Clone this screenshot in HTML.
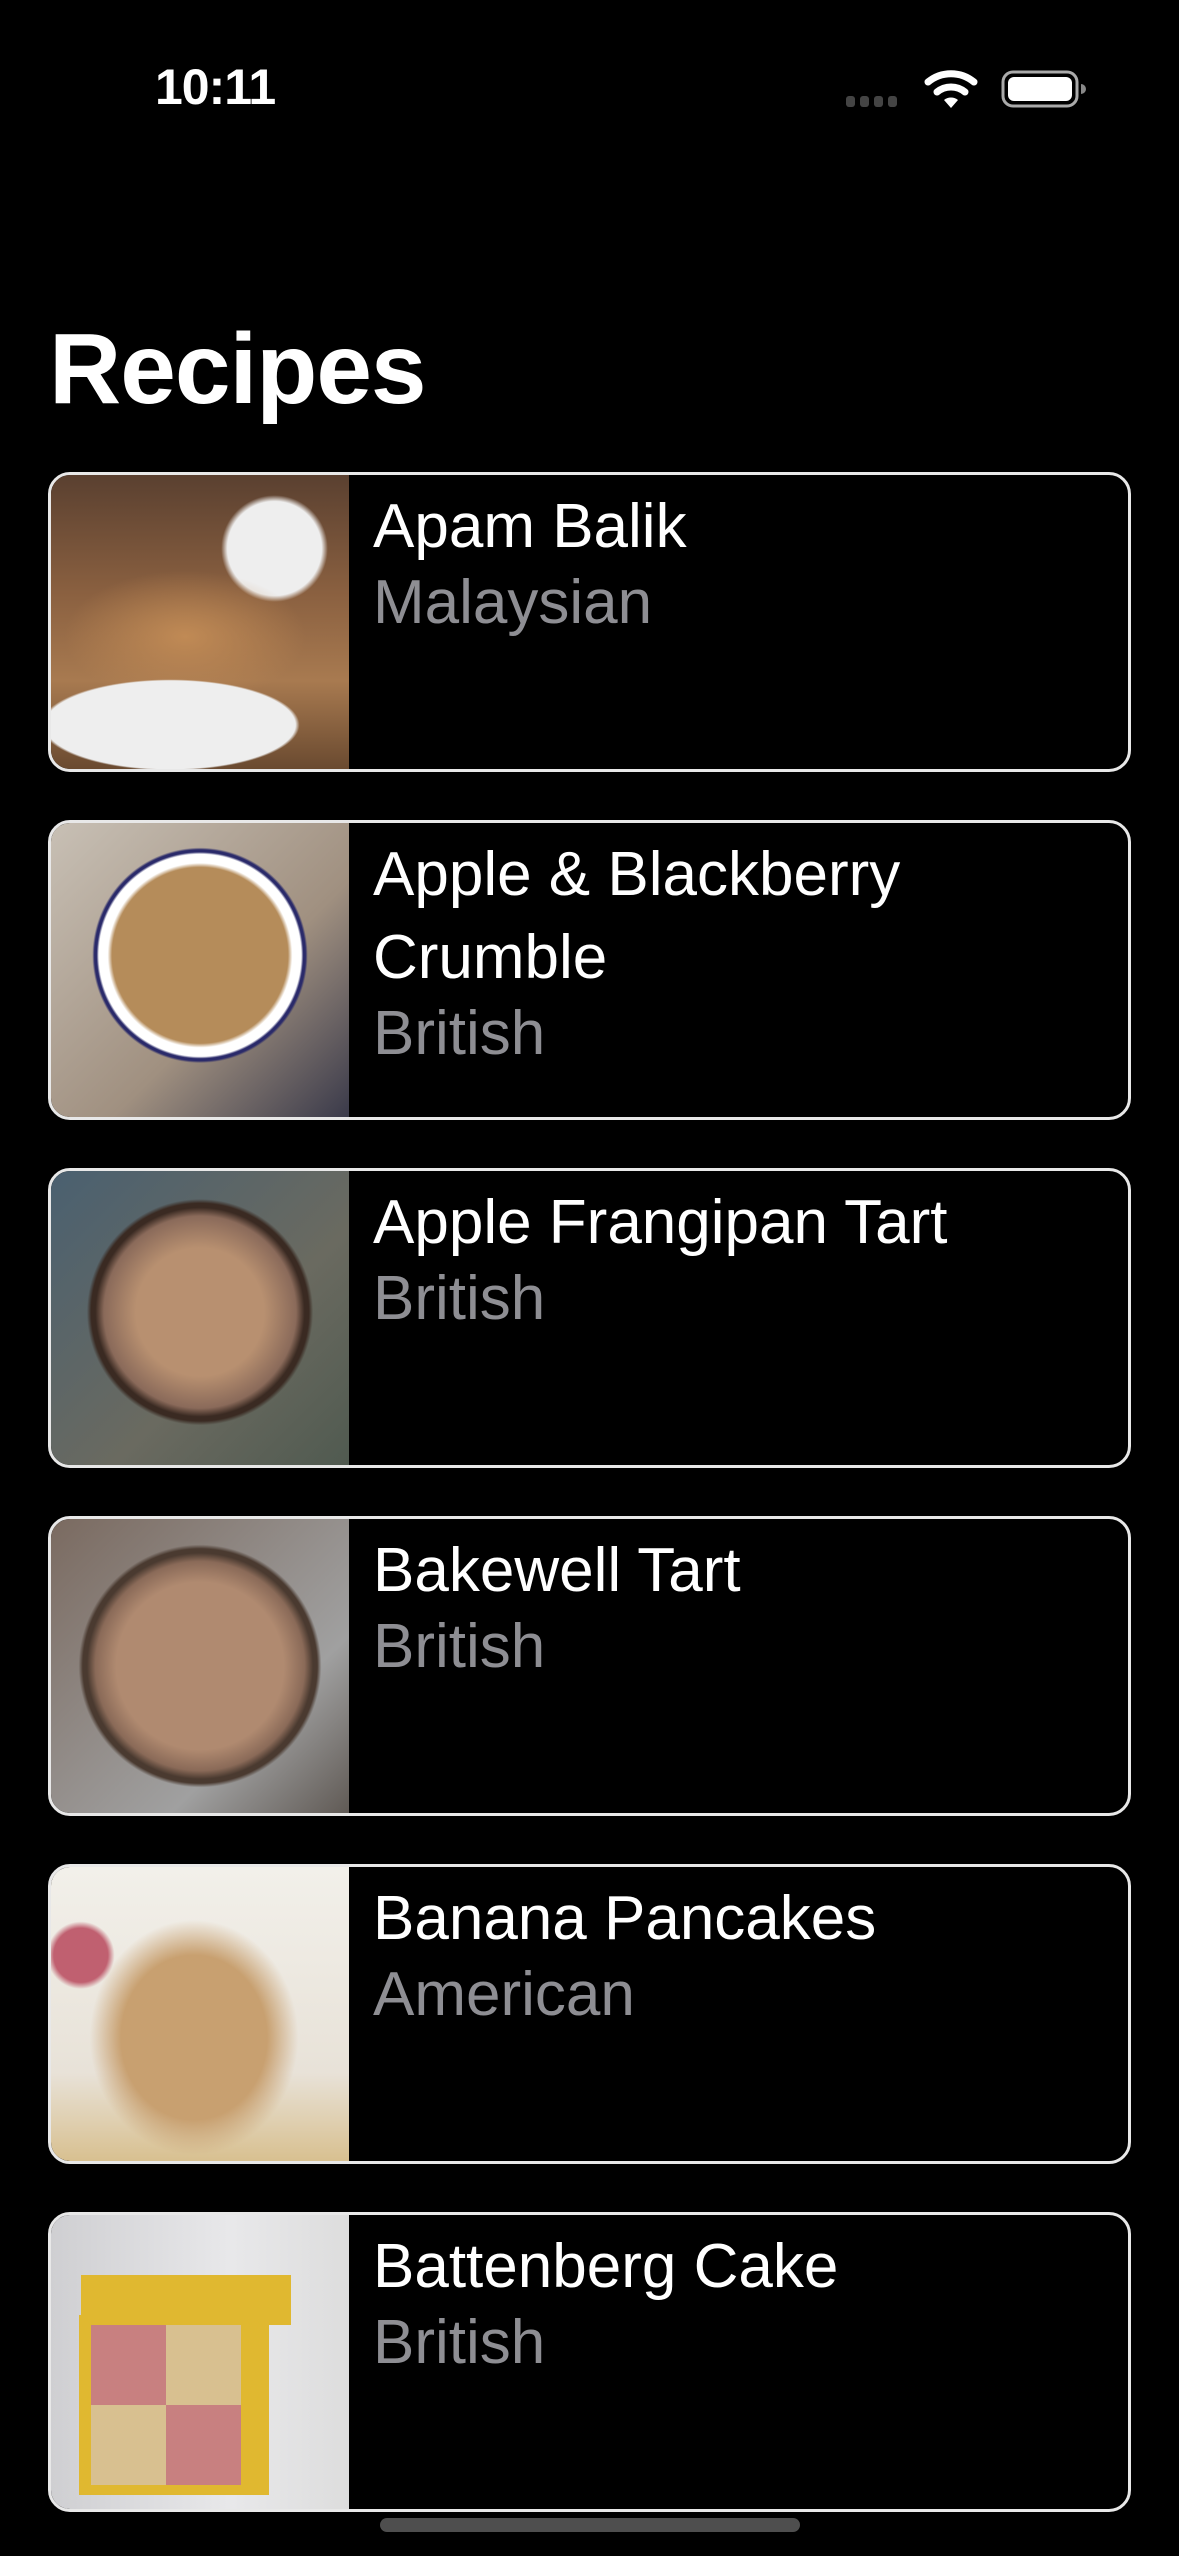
<!DOCTYPE html>
<html><head><meta charset="utf-8"><style>
*{margin:0;padding:0;box-sizing:border-box}
body{width:1179px;height:2556px;background:#000;position:relative;overflow:hidden;font-family:"Liberation Sans",sans-serif;color:#fff}
.time{position:absolute;left:155px;top:58px;font-size:50px;font-weight:bold;letter-spacing:-1px}
h1{position:absolute;left:49px;top:312px;font-size:100px;font-weight:bold;letter-spacing:-1px}
.card{position:absolute;left:48px;width:1083px;height:300px;border:3px solid #e8e8e8;border-radius:22px;overflow:hidden;background:#000}
.img{position:absolute;left:0;top:0;width:298px;height:100%}
.t{position:absolute;left:322px;top:10px;font-size:62px;line-height:83px;width:740px}
.t span{display:block;color:#8e8e93;line-height:70px}
.home{position:absolute;left:380px;top:2518px;width:420px;height:14px;border-radius:7px;background:#4e4e4e}
</style></head><body>
<div class="time">10:11</div>
<svg style="position:absolute;left:840px;top:60px" width="250" height="60" viewBox="0 0 250 60">
<g fill="#444"><rect x="6" y="36" width="9" height="11" rx="3"/><rect x="20" y="36" width="9" height="11" rx="3"/><rect x="34" y="36" width="9" height="11" rx="3"/><rect x="48" y="36" width="9" height="11" rx="3"/></g>
<g fill="none" stroke="#fff" stroke-width="7" stroke-linecap="round"><path d="M88 22a36 36 0 0 1 46 0"/><path d="M97 32a22 22 0 0 1 28 0"/></g>
<path d="M104 40l7 8 7-8a11 11 0 0 0-14 0z" fill="#fff"/>
<rect x="163" y="12" width="74" height="34" rx="10" fill="none" stroke="#aaa" stroke-width="3"/>
<rect x="168" y="17" width="64" height="24" rx="6" fill="#fff"/>
<path d="M241 24v10a5 5 0 0 0 0-10z" fill="#888"/>
</svg>
<h1>Recipes</h1>

<div class="card" style="top:472px">
<div class="img" style="background:radial-gradient(ellipse 70% 25% at 40% 85%,#eee 0 60%,transparent 62%),radial-gradient(ellipse 45% 25% at 45% 55%,#c08a55,transparent 90%),radial-gradient(circle at 75% 25%,#eee 0 15%,transparent 17%),linear-gradient(#5a4030,#8a6040 40%,#a87a50 70%,#6a4a30)"></div>
<div class="t">Apam Balik<span>Malaysian</span></div></div>

<div class="card" style="top:820px">
<div class="img" style="background:radial-gradient(circle at 50% 45%,#b58c5a 0 40%,#fff 42% 46%,#2a2a6a 47% 48%,transparent 49%),linear-gradient(135deg,#c8c0b5,#a09080 60%,#3a3a4a)"></div>
<div class="t">Apple &amp; Blackberry<br>Crumble<span>British</span></div></div>

<div class="card" style="top:1168px">
<div class="img" style="background:radial-gradient(circle at 50% 48%,#b89070 0 30%,#8a6a5a 45%,#3a2a22 49% 51%,transparent 53%),linear-gradient(135deg,#4a6070,#6a6a60 60%,#505a50)"></div>
<div class="t">Apple Frangipan Tart<span>British</span></div></div>

<div class="card" style="top:1516px">
<div class="img" style="background:radial-gradient(circle at 50% 50%,#b08a70 0 40%,#8a6a58 50%,#4a3a30 54% 56%,transparent 58%),linear-gradient(135deg,#7a6a60,#a0a0a0 70%,#605a55)"></div>
<div class="t">Bakewell Tart<span>British</span></div></div>

<div class="card" style="top:1864px">
<div class="img" style="background:radial-gradient(ellipse 35% 40% at 48% 58%,#c8a070 0 70%,transparent 100%),radial-gradient(circle at 10% 30%,#c06070 0 8%,transparent 10%),linear-gradient(#f2f0ea,#e8e2d8 70%,#d8c090)"></div>
<div class="t">Banana Pancakes<span>American</span></div></div>

<div class="card" style="top:2212px">
<div class="img" style="background:linear-gradient(#e0b830,#e0b830) 30px 60px/210px 50px no-repeat,linear-gradient(90deg,#c88080 0 50%,#d8c090 50%) 40px 110px/150px 80px no-repeat,linear-gradient(90deg,#d8c090 0 50%,#c88080 50%) 40px 190px/150px 80px no-repeat,linear-gradient(#e0b830,#e0b830) 28px 100px/190px 180px no-repeat,linear-gradient(90deg,#cfcfd2,#e8e8ea 60%,#ddd)"></div>
<div class="t">Battenberg Cake<span>British</span></div></div>

<div class="home"></div>
</body></html>
